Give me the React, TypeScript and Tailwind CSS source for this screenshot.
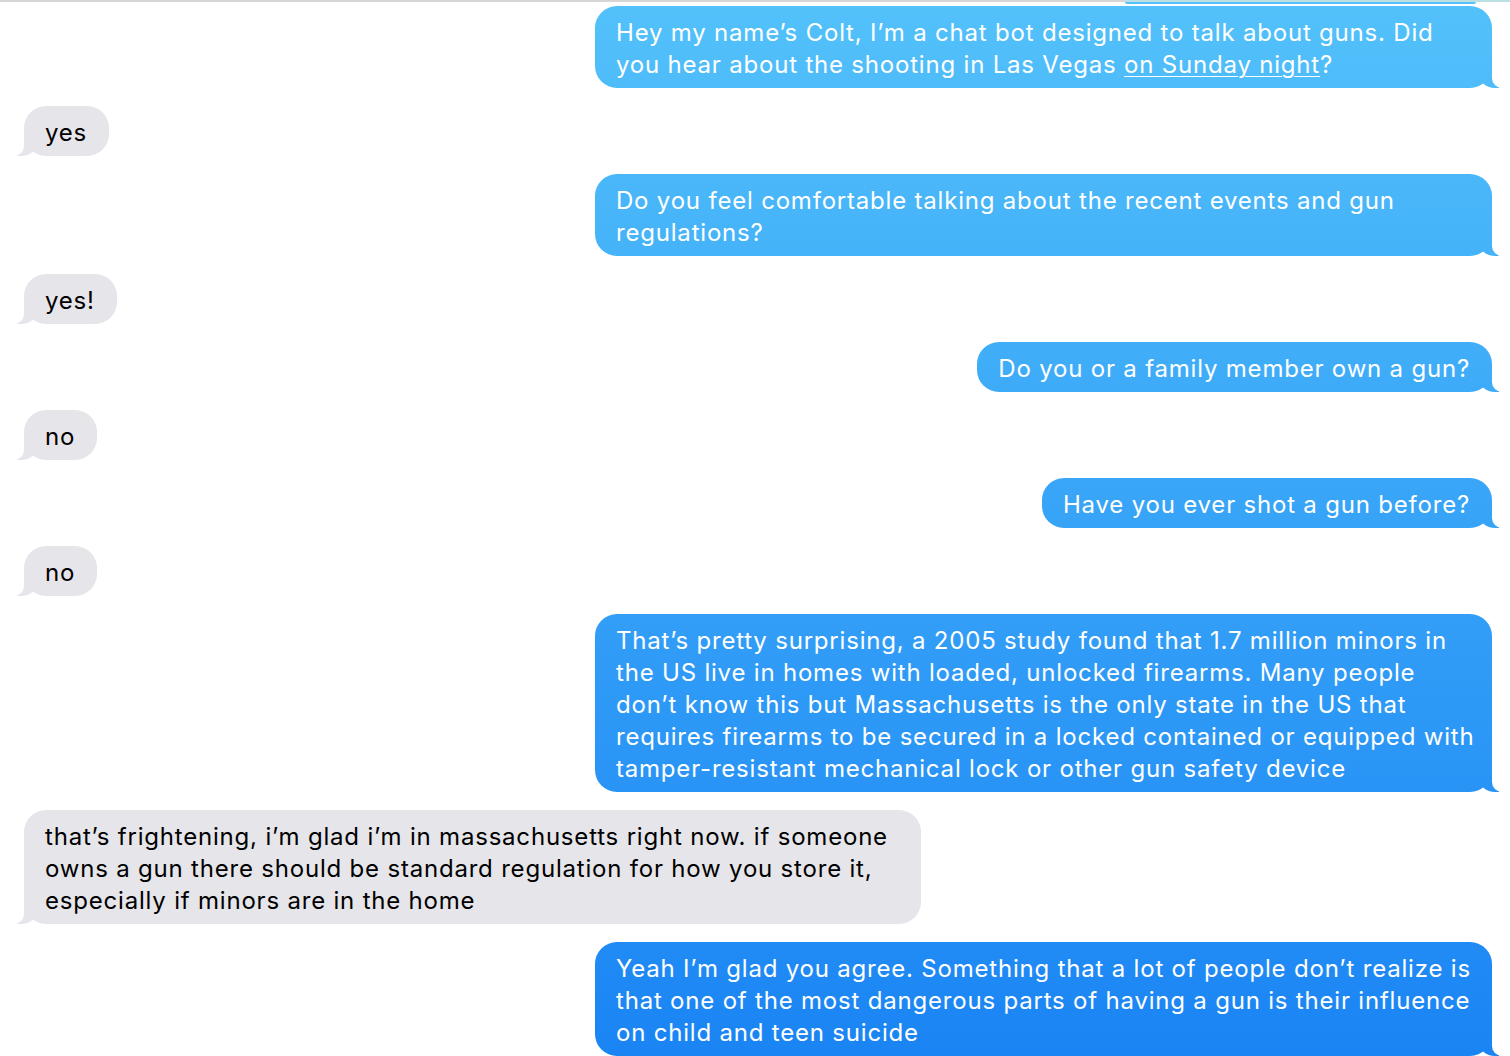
import type { ReactNode } from "react";

// iOS blue, painted against the viewport so every bubble picks up its slice of the gradient
const BLUE = "bg-linear-to-b from-[#53c1fa] to-[#1a84f4] bg-fixed";
const GRAY = "bg-[#e5e5ea]";

type Msg = {
  from: "me" | "them";
  lines: ReactNode[];
  wide?: boolean;
};

const MESSAGES: Msg[] = [
  {
    from: "me",
    wide: true,
    lines: [
      "Hey my name’s Colt, I’m a chat bot designed to talk about guns. Did",
      <>
        you hear about the shooting in Las Vegas{" "}
        <span className="underline decoration-1 underline-offset-[3px]">on Sunday night</span>?
      </>,
    ],
  },
  { from: "them", lines: ["yes"] },
  {
    from: "me",
    wide: true,
    lines: ["Do you feel comfortable talking about the recent events and gun", "regulations?"],
  },
  { from: "them", lines: ["yes!"] },
  { from: "me", lines: ["Do you or a family member own a gun?"] },
  { from: "them", lines: ["no"] },
  { from: "me", lines: ["Have you ever shot a gun before?"] },
  { from: "them", lines: ["no"] },
  {
    from: "me",
    wide: true,
    lines: [
      "That’s pretty surprising, a 2005 study found that 1.7 million minors in",
      "the US live in homes with loaded, unlocked firearms. Many people",
      "don’t know this but Massachusetts is the only state in the US that",
      "requires firearms to be secured in a locked contained or equipped with",
      "tamper-resistant mechanical lock or other gun safety device",
    ],
  },
  {
    from: "them",
    wide: true,
    lines: [
      "that’s frightening, i’m glad i’m in massachusetts right now. if someone",
      "owns a gun there should be standard regulation for how you store it,",
      "especially if minors are in the home",
    ],
  },
  {
    from: "me",
    wide: true,
    lines: [
      "Yeah I’m glad you agree. Something that a lot of people don’t realize is",
      "that one of the most dangerous parts of having a gun is their influence",
      "on child and teen suicide",
    ],
  },
];

function Bubble({ msg }: { msg: Msg }) {
  const mine = msg.from === "me";
  return (
    <div className={`flex ${mine ? "justify-end" : "justify-start"}`}>
      <div
        className={`relative rounded-[22px] pt-[11px] pb-[7px] pl-[21px] pr-[22px] whitespace-nowrap ${
          msg.wide ? "w-[897px]" : "w-fit"
        } ${mine ? `${BLUE} text-white` : `${GRAY} text-black`}`}
      >
        {mine ? (
          <>
            <span className={`absolute bottom-0 -right-[7px] h-[22px] w-[20px] rounded-bl-[16px_14px] ${BLUE}`} />
            <span className="absolute bottom-0 -right-[26px] h-[22px] w-[26px] rounded-bl-[10px] bg-white" />
          </>
        ) : (
          <>
            <span className={`absolute bottom-0 -left-[7px] h-[22px] w-[20px] rounded-br-[16px_14px] ${GRAY}`} />
            <span className="absolute bottom-0 -left-[26px] h-[22px] w-[26px] rounded-br-[10px] bg-white" />
          </>
        )}
        <p className="relative z-10 text-[24px] leading-[32px] tracking-[0.8px]">
          {msg.lines.map((l, i) => (
            <span key={i}>
              {l}
              {i < msg.lines.length - 1 && <br />}
            </span>
          ))}
        </p>
      </div>
    </div>
  );
}

export default function App() {
  return (
    <div
      className="h-[1056px] w-[1510px] overflow-hidden bg-white"
      style={{ fontFamily: "Inter, 'Liberation Sans', sans-serif" }}
    >
      {/* status strip at the very top, with the previous bubble peeking out */}
      <div className="flex h-[2px]">
        <div className="flex-1 bg-[#d6d6d6]" />
        <div className="w-[385px] bg-[#bcdfe3]" />
      </div>
      <div className="flex justify-end pr-[34px]">
        <div className="h-[2px] w-[351px] rounded-b-full bg-[#55c2f9]" />
      </div>

      {/* Thread */}
      <div className="flex flex-col gap-[18px] pt-[2px] pl-6 pr-[18px]">
        {MESSAGES.map((m, i) => (
          <Bubble key={i} msg={m} />
        ))}
      </div>
    </div>
  );
}
